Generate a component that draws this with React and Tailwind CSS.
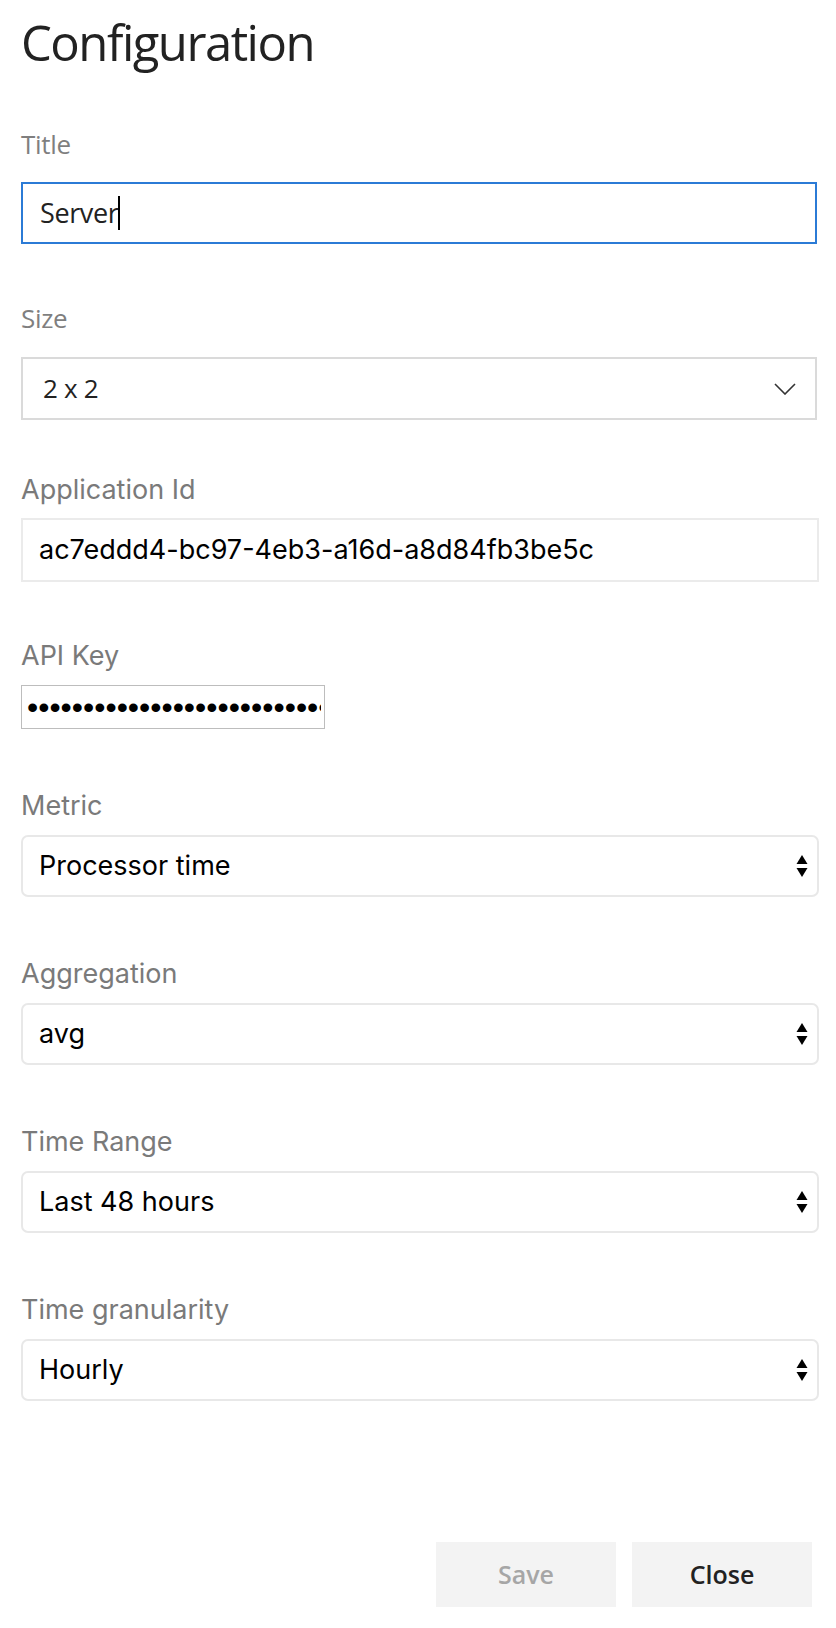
import React from "react";

function Label({ children, mac }) {
  return (
    <div
      className={
        mac
          ? "font-['Inter',sans-serif] text-[27px] leading-[32px] text-[#7a7a7a]"
          : "font-['Open_Sans',sans-serif] text-[26px] leading-[32px] text-[#7f7f7f] tracking-[-0.3px]"
      }
    >
      {children}
    </div>
  );
}

function UpDown() {
  return (
    <svg width="12" height="24" viewBox="0 0 12 24" className="shrink-0">
      <path d="M6 1 L11.5 10 L0.5 10 Z" fill="#000" />
      <path d="M0.5 14 L11.5 14 L6 23 Z" fill="#000" />
    </svg>
  );
}

function MacSelect({ label, value }) {
  return (
    <div className="flex flex-col">
      <Label mac>{label}</Label>
      <div className="mt-[13px] h-[62px] w-[798px] rounded-[7px] border-2 border-[#e8e8e8] flex items-center justify-between pl-[16px] pr-[9px]">
        <span className="font-['Inter',sans-serif] text-[27px] text-black">{value}</span>
        <UpDown />
      </div>
    </div>
  );
}

export default function App() {
  return (
    <div className="w-[836px] h-[1628px] bg-white px-[21px] flex flex-col">
      <h1 className="mt-[10px] font-['Open_Sans',sans-serif] text-[49px] leading-[64px] text-[#222] tracking-[-1.5px]">
        Configuration
      </h1>

      {/* Title */}
      <div className="mt-[54px] flex flex-col">
        <Label>Title</Label>
        <div className="mt-[22px] h-[62px] w-[796px] border-2 border-[#2b7bd6] flex items-center pl-[17px]">
          <span className="font-['Open_Sans',sans-serif] text-[27px] text-[#222] tracking-[-0.4px]">Server</span>
          <span className="w-[2px] h-[34px] bg-black" />
        </div>
      </div>

      {/* Size */}
      <div className="mt-[58px] flex flex-col">
        <Label>Size</Label>
        <div className="mt-[23px] h-[63px] w-[796px] border-2 border-[#dadada] flex items-center justify-between pl-[20px] pr-[19px]">
          <span className="font-['Open_Sans',sans-serif] text-[26px] text-[#222] tracking-[-0.3px]">2 x 2</span>
          <svg width="22" height="12" viewBox="0 0 22 12">
            <path d="M1 1 L11 11 L21 1" fill="none" stroke="#333" strokeWidth="1.6" />
          </svg>
        </div>
      </div>

      {/* Application Id */}
      <div className="mt-[54px] flex flex-col">
        <Label mac>Application Id</Label>
        <div className="mt-[12px] h-[64px] w-[798px] border-2 border-[#ebebeb] flex items-center pl-[16px]">
          <span className="font-['Inter',sans-serif] text-[27px] text-black">ac7eddd4-bc97-4eb3-a16d-a8d84fb3be5c</span>
        </div>
      </div>

      {/* API Key */}
      <div className="mt-[58px] flex flex-col">
        <Label mac>API Key</Label>
        <div className="mt-[13px] h-[44px] w-[304px] border border-[#bdbdbd] flex items-center pl-[5px] pr-[3px] overflow-hidden">
          <span className="font-['Liberation_Sans',sans-serif] text-[32px] leading-none text-black whitespace-nowrap overflow-hidden">
            {"•".repeat(40)}
          </span>
        </div>
      </div>

      <div className="mt-[61px] flex flex-col gap-[61px]">
        <MacSelect label="Metric" value="Processor time" />
        <MacSelect label="Aggregation" value="avg" />
        <MacSelect label="Time Range" value="Last 48 hours" />
        <MacSelect label="Time granularity" value="Hourly" />
      </div>

      <div className="mt-auto mb-[21px] flex justify-end gap-[16px] pr-[3px]">
        <button className="w-[180px] h-[65px] bg-[#f3f3f3] font-['Open_Sans',sans-serif] font-semibold text-[25px] text-[#a6a6a6]">
          Save
        </button>
        <button className="w-[180px] h-[65px] bg-[#f3f3f3] font-['Open_Sans',sans-serif] font-semibold text-[25px] text-[#222]">
          Close
        </button>
      </div>
    </div>
  );
}
